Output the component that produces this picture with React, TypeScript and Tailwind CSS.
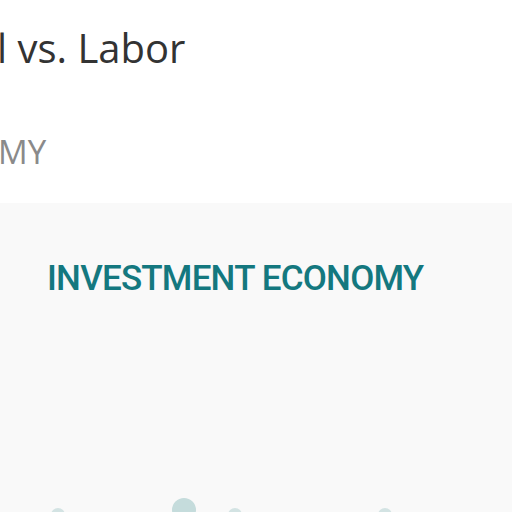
export default function App() {
  return (
    <div className="w-[512px] h-[512px] overflow-hidden bg-white flex flex-col">
      <div className="h-[203px] shrink-0 bg-white flex flex-col">
        <div className="pt-[22px] text-[40px] leading-[52px] text-[#333] -ml-[3px] whitespace-nowrap" style={{ fontFamily: '"Open Sans", sans-serif' }}>
          l vs. Labor
        </div>
        <div className="mt-[58px] text-[33px] leading-[40px] text-[#8a8a8a] -ml-[2px] whitespace-nowrap" style={{ fontFamily: '"Open Sans", sans-serif' }}>
          MY
        </div>
      </div>
      <div className="flex-1 bg-[#f9f9f9] flex flex-col overflow-hidden">
        <div className="pt-[56px] pl-[47px] text-[35px] leading-[40px] text-[#14787f] font-medium tracking-[-0.8px] whitespace-nowrap" style={{ fontFamily: 'Roboto, sans-serif' }}>
          INVESTMENT ECONOMY
        </div>
        <div className="mt-auto h-[8px] shrink-0 flex items-start pl-[51px]">
          <div className="mt-[4px] w-[14px] h-[14px] rounded-full bg-[#d3e3e3] shrink-0" />
          <div className="ml-[107px] -mt-[6px] w-[24px] h-[24px] rounded-full bg-[#c5dcdc] shrink-0" />
          <div className="ml-[32px] mt-[4px] w-[14px] h-[14px] rounded-full bg-[#d3e3e3] shrink-0" />
          <div className="ml-[136px] mt-[4px] w-[14px] h-[14px] rounded-full bg-[#d3e3e3] shrink-0" />
        </div>
      </div>
    </div>
  );
}
